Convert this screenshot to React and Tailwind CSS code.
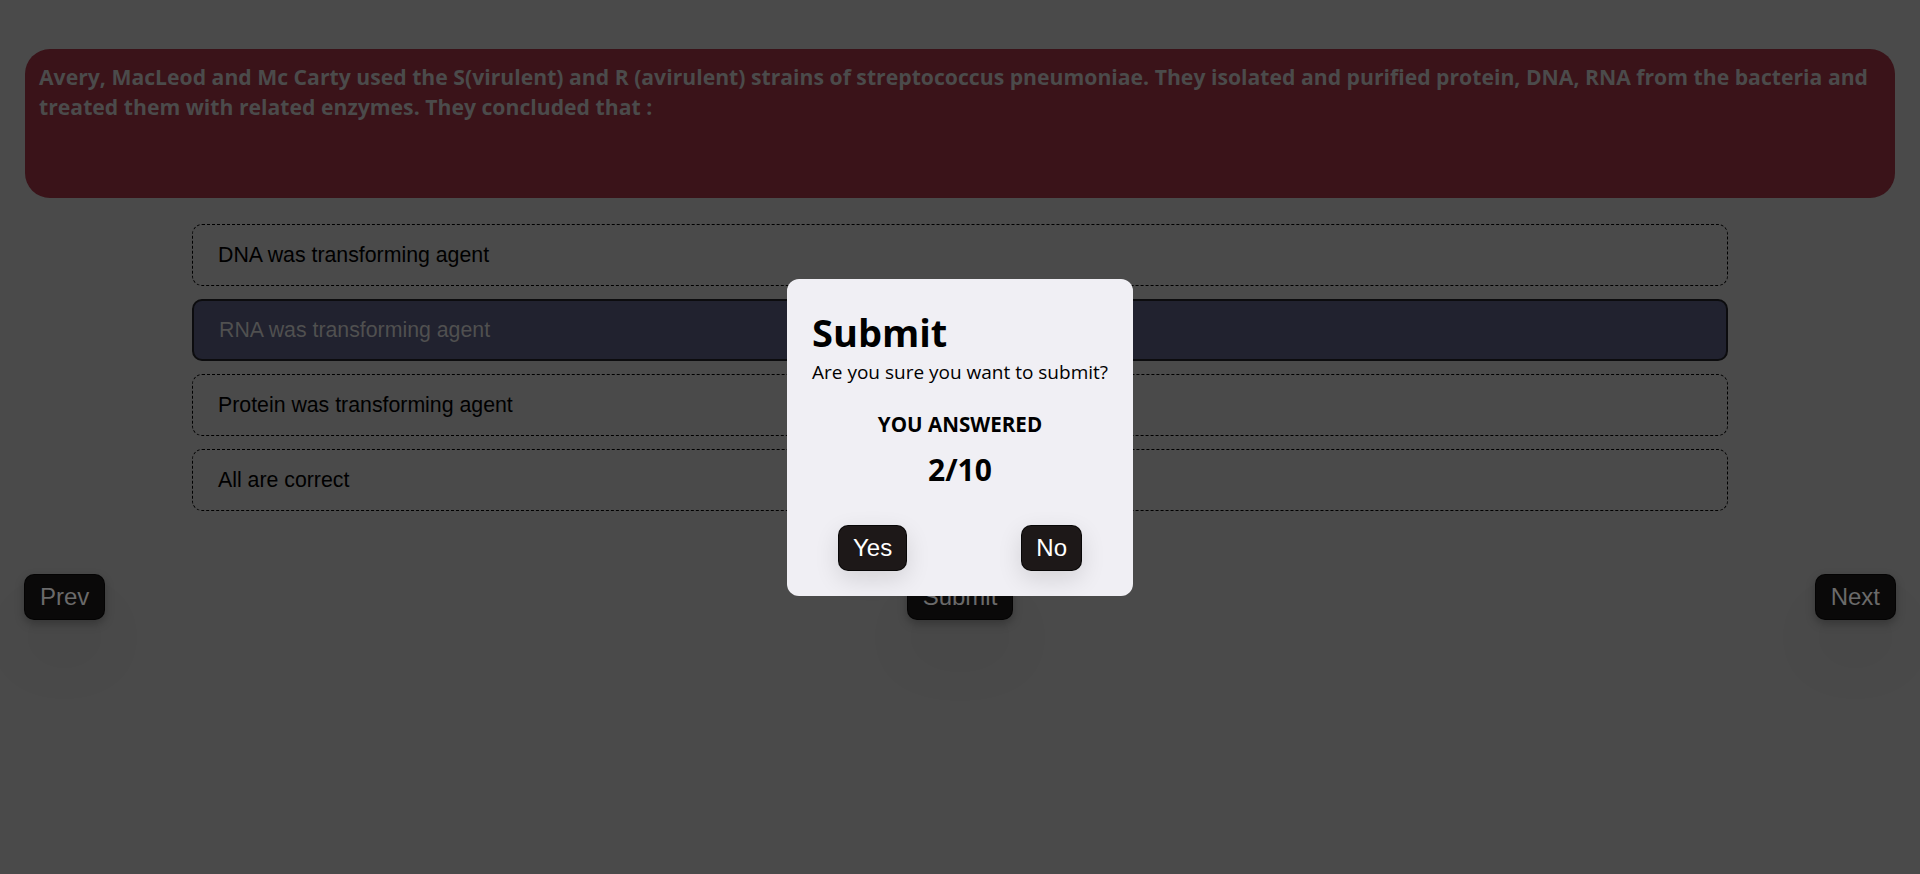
const options = [
  'DNA was transforming agent',
  'RNA was transforming agent',
  'Protein was transforming agent',
  'All are correct',
]

const selected = 1

function SubmitModal() {
  return (
    <div className="fixed inset-0 flex items-center justify-center">
      <div className="w-[346px] rounded-xl bg-[#f0eff4] px-[25px] pt-[30px] pb-[25px] font-['Open_Sans',sans-serif] text-black">
        <h2 className="text-[38px] font-bold leading-[46px]">Submit</h2>
        <p className="mt-[3px] text-[19px] leading-[28px]">Are you sure you want to submit?</p>
        <p className="mt-6 text-center text-[20.6px] font-bold leading-7">YOU ANSWERED</p>
        <p className="mt-[14px] text-center text-[30px] font-bold leading-9">2/10</p>
        <div className="mt-[37px] flex justify-between px-[26px] font-['Liberation_Sans',Arial,sans-serif]">
          <button
            type="button"
            className="rounded-[10px] border border-black/70 bg-[#1d1818] px-[14px] py-[8px] text-[24px] leading-7 text-white shadow-[0_8px_24px_rgba(0,0,0,0.12)]"
          >
            Yes
          </button>
          <button
            type="button"
            className="rounded-[10px] border border-black/70 bg-[#1d1818] px-[14px] py-[8px] text-[24px] leading-7 text-white shadow-[0_8px_24px_rgba(0,0,0,0.12)]"
          >
            No
          </button>
        </div>
      </div>
    </div>
  )
}

function NavButton({ children }) {
  return (
    <button
      type="button"
      className="rounded-[10px] border border-black/60 bg-[#0a0909] px-[15px] py-[8px] text-[24px] leading-7 text-[#6a6a6a] shadow-[0_4px_10px_rgba(0,0,0,0.25),0_40px_60px_rgba(0,0,0,0.05)]"
    >
      {children}
    </button>
  )
}

export default function App() {
  return (
    <div className="min-h-screen bg-[#4a4a4a] pt-[49px] font-['Liberation_Sans',Arial,sans-serif]">
      <div className="mx-[25px] h-[149px] rounded-[25px] bg-[#3a1319] pt-[13px] pr-[9px] pl-[14px] font-['Open_Sans',sans-serif] text-[21.2px] font-bold leading-[30px] text-[#4b4b4b]">
        Avery, MacLeod and Mc Carty used the S(virulent) and R (avirulent) strains of streptococcus pneumoniae. They isolated and purified protein, DNA, RNA from the bacteria and treated them with related enzymes. They concluded that :
      </div>

      <div className="mx-auto mt-[26px] flex w-4/5 flex-col gap-[13px]">
        {options.map((opt, i) =>
          i === selected ? (
            <div
              key={opt}
              className="flex h-[62px] items-center rounded-[10px] border-2 border-[#0c0c0e] bg-[#21222f] pt-[2px] pl-[25px] text-[21.3px] text-[#505050]"
            >
              {opt}
            </div>
          ) : (
            <div
              key={opt}
              className="flex h-[62px] items-center rounded-[10px] border border-dashed border-black pt-[2px] pl-[25px] text-[21.3px] text-black"
            >
              {opt}
            </div>
          )
        )}
      </div>

      <div className="mt-[63px] flex items-center justify-between px-[24px]">
        <NavButton>Prev</NavButton>
        <NavButton>Submit</NavButton>
        <NavButton>Next</NavButton>
      </div>

      <SubmitModal />
    </div>
  )
}
